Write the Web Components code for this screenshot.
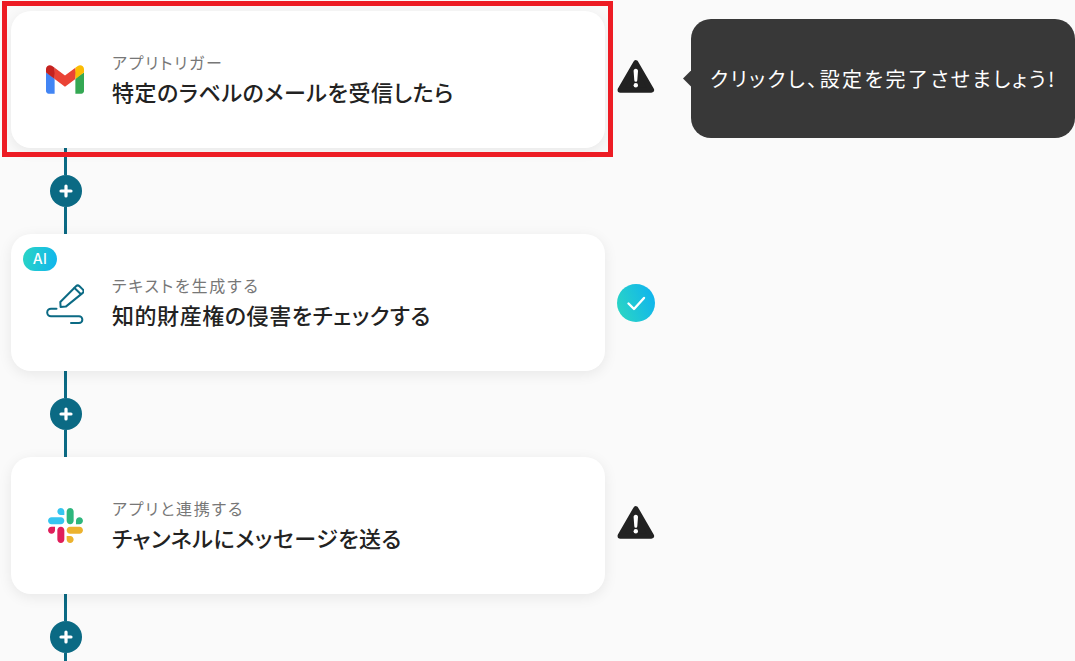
<!DOCTYPE html>
<html lang="ja">
<head>
<meta charset="utf-8">
<title>Flow</title>
<style>
html,body{margin:0;padding:0;background:#fafafa;height:661px;overflow:hidden}
body{font-family:"Noto Sans CJK JP","Noto Sans",sans-serif}
</style>
</head>
<body>
<flow-canvas>
  <flow-step label="アプリトリガー" title-text="特定のラベルのメールを受信したら" status="warn" selected>
    <svg slot="icon" width="38" height="29" viewBox="0 0 256 193"><path fill="#4285F4" d="M58.182 192.05V93.14L27.507 65.077 0 49.504v125.091c0 9.658 7.825 17.455 17.455 17.455h40.727Z"/><path fill="#34A853" d="M197.818 192.05h40.727c9.659 0 17.455-7.826 17.455-17.455V49.505l-31.156 17.837-27.026 25.798v98.91Z"/><path fill="#EA4335" d="m58.182 93.14-4.174-38.647 4.174-36.989L128 69.868l69.818-52.364 4.669 34.992-4.669 40.644L128 145.504z"/><path fill="#FBBC04" d="M197.818 17.504V93.14L256 49.504V26.231c0-21.585-24.64-33.89-41.89-20.945l-16.292 12.218Z"/><path fill="#C5221F" d="m0 49.504 26.759 20.07L58.182 93.14V17.504L41.89 5.286C24.61-7.66 0 4.646 0 26.23v23.273Z"/></svg>
  </flow-step>
  <flow-connector></flow-connector>
  <flow-step label="テキストを生成する" title-text="知的財産権の侵害をチェックする" status="ok" ai>
    <svg slot="icon" width="38" height="43" viewBox="0 0 38 43" fill="none" stroke="#0b6a84" stroke-width="2" stroke-linecap="round" stroke-linejoin="round"><path d="M14.600 26 14.300 21 30 5.300a2.500 2.500 0 0 1 3.500-.1l3.200 3.200a2.500 2.500 0 0 1 .1 3.500L19.800 25.600Z"/><path d="m28.500 7 6.200 6"/><path d="M10.500 27.700H5a3.800 3.800 0 0 0 0 7.600h28a3.350 3.350 0 0 1 0 6.700H25"/></svg>
  </flow-step>
  <flow-connector></flow-connector>
  <flow-step label="アプリと連携する" title-text="チャンネルにメッセージを送る" status="warn">
    <svg slot="icon" width="35" height="35" viewBox="0 0 2447.6 2452.5"><path d="m897.4 0c-135.3.1-244.8 109.9-244.7 245.2-.1 135.3 109.5 245.1 244.8 245.2h244.8v-245.1c.1-135.3-109.5-245.1-244.9-245.3.1 0 .1 0 0 0m0 654h-652.6c-135.3.1-244.9 109.9-244.8 245.2-.2 135.3 109.4 245.1 244.7 245.3h652.7c135.3-.1 244.9-109.9 244.8-245.2.1-135.4-109.5-245.2-244.8-245.3z" fill="#36c5f0"/><path d="m2447.6 899.2c.1-135.3-109.5-245.1-244.8-245.2-135.3.1-244.9 109.9-244.8 245.2v245.3h244.8c135.3-.1 244.9-109.9 244.8-245.3zm-652.7 0v-654c.1-135.2-109.4-245-244.7-245.2-135.3.1-244.9 109.9-244.8 245.2v654c-.2 135.3 109.4 245.1 244.7 245.3 135.3-.1 244.9-109.9 244.8-245.3z" fill="#2eb67d"/><path d="m1550.1 2452.5c135.3-.1 244.9-109.9 244.8-245.2.1-135.3-109.5-245.1-244.8-245.2h-244.8v245.2c-.1 135.2 109.5 245 244.8 245.2zm0-654.1h652.7c135.3-.1 244.9-109.9 244.8-245.2.2-135.3-109.4-245.1-244.7-245.3h-652.7c-135.3.1-244.9 109.9-244.8 245.2-.1 135.4 109.4 245.2 244.7 245.3z" fill="#ecb22e"/><path d="m0 1553.2c-.1 135.3 109.5 245.1 244.8 245.2 135.3-.1 244.9-109.9 244.8-245.2v-245.2h-244.8c-135.3.1-244.9 109.9-244.8 245.2zm652.7 0v654c-.2 135.3 109.4 245.1 244.7 245.3 135.3-.1 244.9-109.9 244.8-245.2v-653.9c.2-135.3-109.4-245.1-244.7-245.3-135.4 0-244.9 109.8-244.8 245.1 0 0 0 .1 0 0z" fill="#e01e5a"/></svg>
  </flow-step>
  <flow-connector last></flow-connector>
  <flow-tooltip>クリックし、設定を完了させましょう!</flow-tooltip>
</flow-canvas>
<script>
const FONT = '"Noto Sans CJK JP","Noto Sans",sans-serif';
class FlowCanvas extends HTMLElement {
  constructor(){ super();
    this.attachShadow({mode:'open'}).innerHTML = `<style>
      :host{display:flex;flex-direction:column;align-items:flex-start;position:relative;box-sizing:border-box;width:1075px;height:661px;padding:11px 0 0 11px;overflow:hidden;background:#fafafa;font-family:${FONT};font-feature-settings:"palt"}
    </style><slot></slot>`;
  }
}
class FlowStep extends HTMLElement {
  constructor(){ super();
    const s = this.getAttribute('status');
    const warn = `<svg width="38" height="35" viewBox="0 0 38 35"><path d="M18.800 3 34.300 29.900H3.300Z" fill="#222" stroke="#222" stroke-width="5.500" stroke-linejoin="round"/><path d="M18.800 8.800c-1.400 0-2.300 1-2.200 2.300l.7 9.200a1.500 1.500 0 0 0 3 0l.7-9.200c.1-1.300-.8-2.300-2.200-2.300Z" fill="#fff"/><circle cx="18.800" cy="25.300" r="2.200" fill="#fff"/></svg>`;
    const ok = `<svg width="38" height="38" viewBox="0 0 38 38"><defs><linearGradient id="g" x1="0" y1=".7" x2="1" y2=".3"><stop offset="0" stop-color="#2ad5c4"/><stop offset="1" stop-color="#10b4ee"/></linearGradient></defs><circle cx="19" cy="19" r="19" fill="url(#g)"/><path d="m11.500 19.500 5.500 5.500 10-11" fill="none" stroke="#fff" stroke-width="2.400" stroke-linecap="round" stroke-linejoin="round"/></svg>`;
    this.attachShadow({mode:'open'}).innerHTML = `<style>
      :host{display:flex;align-items:center;gap:12px;position:relative}
      .card{position:relative;display:flex;align-items:center;box-sizing:border-box;width:594px;height:137px;background:#fff;border-radius:20px;box-shadow:0 3px 14px rgba(0,0,0,.08)}
      .icon{display:flex;align-items:center;justify-content:center;width:38px;margin-left:35px;margin-right:28px;flex:none}
      .text{display:flex;flex-direction:column;gap:3px;margin-top:-3px}
      .label{font-size:16px;line-height:22px;color:#777;letter-spacing:1.8px}
      .title{font-size:22px;line-height:30px;font-weight:500;color:#222;letter-spacing:.56px}
      .ai{position:absolute;left:12px;top:13px;width:34px;height:24px;border-radius:12px;background:linear-gradient(100deg,#2ad5c4,#10b4ee);color:#fff;font:500 14px/24px Inter,"Noto Sans",sans-serif;letter-spacing:.5px;text-align:center}
      .status{display:flex;width:38px;justify-content:center}
      .warn{margin-top:-5px}
      .sel{position:absolute;left:-9px;top:-10px;width:611px;height:156px;box-sizing:border-box;border:5px solid #ed1c24;pointer-events:none}
    </style>
    <div class="card">
      ${this.hasAttribute('ai')?'<div class="ai">AI</div>':''}
      <div class="icon"><slot name="icon"></slot></div>
      <div class="text"><div class="label">${this.getAttribute('label')}</div><div class="title">${this.getAttribute('title-text')}</div></div>
    </div>
    <div class="status ${s==='ok'?'':'warn'}">${s==='ok'?ok:warn}</div>
    ${this.hasAttribute('selected')?'<div class="sel"></div>':''}`;
  }
}
class FlowConnector extends HTMLElement {
  constructor(){ super();
    this.attachShadow({mode:'open'}).innerHTML = `<style>
      :host{display:flex;flex-direction:column;align-items:flex-start;width:32px;height:86px;margin-left:39px;flex:none}
      .line{width:3px;margin-left:14px;background:#0b6a84;flex:1}
      .plus{flex:none;width:32px;height:32px;border-radius:50%;background:#0b6a84;display:flex;align-items:center;justify-content:center}
      .top{flex:none;height:27px}
    </style>
    <div class="line top"></div>
    <div class="plus"><svg width="14" height="14" viewBox="0 0 14 14"><path d="M7 2v10M2 7h10" stroke="#fff" stroke-width="3.200" stroke-linecap="round"/></svg></div>
    <div class="line"></div>`;
  }
}
class FlowTooltip extends HTMLElement {
  constructor(){ super();
    this.attachShadow({mode:'open'}).innerHTML = `<style>
      :host{position:absolute;left:691px;top:19px;width:384px;height:119px;box-sizing:border-box;padding-left:19px;display:flex;align-items:center;background:#383838;border-radius:20px;color:#fff;font-size:20px;letter-spacing:2.45px;white-space:nowrap}
      .arrow{position:absolute;left:-8px;top:51.500px;width:16px;height:16px;background:#383838;clip-path:polygon(0 50%,50% 0,50% 100%)}
    </style><div class="arrow"></div><slot></slot>`;
  }
}
customElements.define('flow-canvas',FlowCanvas);
customElements.define('flow-step',FlowStep);
customElements.define('flow-connector',FlowConnector);
customElements.define('flow-tooltip',FlowTooltip);
</script>
</body>
</html>
